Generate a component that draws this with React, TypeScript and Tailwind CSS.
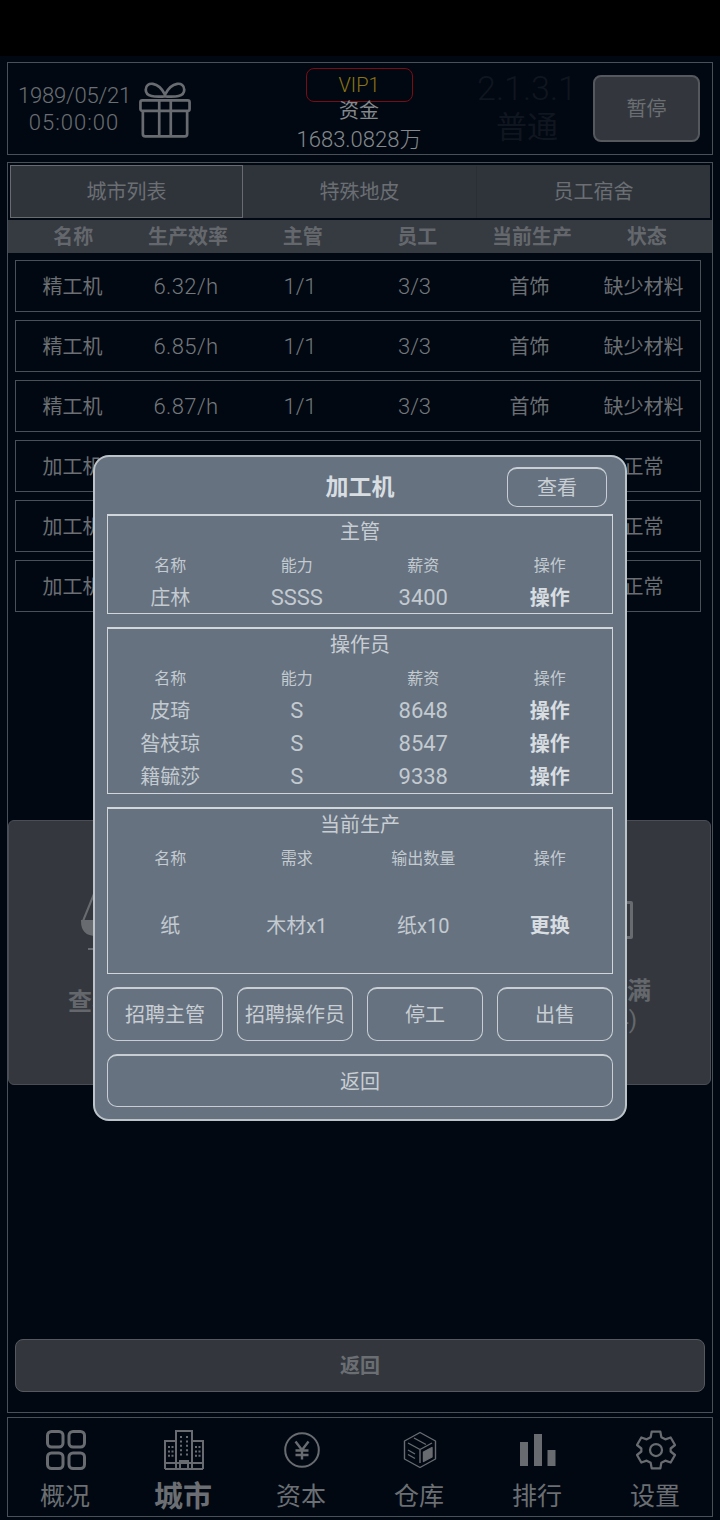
import { ReactNode } from 'react';

const FONT = "font-['Roboto','Noto_Sans_CJK_SC',sans-serif]";

const machines = [
  { name: '精工机', rate: '6.32/h', lead: '1/1', staff: '3/3', product: '首饰', status: '缺少材料' },
  { name: '精工机', rate: '6.85/h', lead: '1/1', staff: '3/3', product: '首饰', status: '缺少材料' },
  { name: '精工机', rate: '6.87/h', lead: '1/1', staff: '3/3', product: '首饰', status: '缺少材料' },
  { name: '加工机', rate: '6.40/h', lead: '1/1', staff: '3/3', product: '纸', status: '正常' },
  { name: '加工机', rate: '6.52/h', lead: '1/1', staff: '3/3', product: '纸', status: '正常' },
  { name: '加工机', rate: '6.61/h', lead: '1/1', staff: '3/3', product: '纸', status: '正常' },
];

const operators = [
  { name: '皮琦', skill: 'S', pay: '8648' },
  { name: '昝枝琼', skill: 'S', pay: '8547' },
  { name: '籍毓莎', skill: 'S', pay: '9338' },
];

function GiftIcon() {
  return (
    <svg width="52" height="60" viewBox="0 0 54 60" fill="none" stroke="#686c70" strokeWidth="2.8" strokeLinejoin="round">
      <path d="M27 17C21 17 7 19 7 10C7 1 20 1 27 15C34 1 47 1 47 10C47 19 33 17 27 17Z" />
      <rect x="1.5" y="21" width="51" height="11" rx="2" />
      <path d="M4 32V56C4 57.5 5 58.5 6.5 58.5H47.5C49 58.5 50 57.5 50 56V32" />
      <path d="M21 21V58M33 21V58" />
    </svg>
  );
}

function GridIcon() {
  return (
    <svg width="40" height="40" viewBox="0 0 40 40" fill="none" stroke="#686c70" strokeWidth="3">
      <rect x="1.5" y="1.5" width="15.5" height="15.5" rx="4" />
      <rect x="23" y="1.5" width="15.5" height="15.5" rx="4" />
      <rect x="1.5" y="23" width="15.5" height="15.5" rx="4" />
      <rect x="23" y="23" width="15.5" height="15.5" rx="4" />
    </svg>
  );
}

function CityIcon() {
  return (
    <svg width="40" height="40" viewBox="0 0 40 40" fill="none" stroke="#686c70" strokeWidth="2">
      <path d="M1 39V11H12M39 39V11H28M12 39V1H28V39" />
      <path d="M1 33H39M1 39H39" />
      <path d="M16 39V31H24V39" />
      <path d="M17 6V27M23 6V27M5 16V28M8.500 16V28M32 16V28M35.500 16V28" strokeDasharray="2 2.4" />
    </svg>
  );
}

function YenIcon() {
  return (
    <svg width="36" height="36" viewBox="0 0 36 36" fill="none" stroke="#686c70" strokeWidth="2">
      <circle cx="18" cy="18" r="16.8" />
      <path d="M11.5 9.5L18 18L24.5 9.5M18 18V27.5M11.5 18.5H24.5M11.5 23H24.5" strokeWidth="2.4" />
    </svg>
  );
}

function CubeIcon() {
  return (
    <svg width="34" height="38" viewBox="0 0 34 38" fill="none" stroke="#686c70" strokeWidth="1.4" strokeLinejoin="round">
      <path d="M17 1.500L32.500 10V28L17 36.500L1.500 28V10Z" />
      <path d="M5 12L17 18.500L29 12M17 18.500V32" />
      <path d="M11 7L23 13.500M5 19L12 23M5 23.500L12 27.500" />
      <path d="M20.500 21L29 16.500V26L20.500 30.500Z" fill="#686c70" />
    </svg>
  );
}

function BarsIcon() {
  return (
    <svg width="36" height="32" viewBox="0 0 36 32" fill="#686c70">
      <rect x="0" y="8" width="8" height="24" />
      <rect x="14" y="0" width="8" height="32" />
      <rect x="27.500" y="16" width="8" height="16" />
    </svg>
  );
}

function GearIcon() {
  return (
    <svg width="40" height="40" viewBox="0 0 24 24" fill="none" stroke="#686c70" strokeWidth="1.35" strokeLinejoin="round">
      <path d="M9.400 1H14.600L15.200 4.300L17.600 5.600L20.800 4.500L23.400 9L20.800 11.100V12.900L23.400 15L20.800 19.500L17.600 18.400L15.200 19.700L14.600 23H9.400L8.800 19.700L6.400 18.400L3.200 19.500L.6 15L3.200 12.900V11.100L.6 9L3.200 4.500L6.400 5.600L8.800 4.300Z" />
      <circle cx="12" cy="12" r="3.600" />
    </svg>
  );
}

function ScaleIcon() {
  return (
    <svg width="76" height="70" viewBox="0 0 76 70" fill="none" stroke="#686c70" strokeWidth="2">
      <path d="M16 6L3 38M16 6L30 38" />
      <path d="M2 38H30C30 48 24 52 16 52C8 52 2 48 2 38Z" fill="#686c70" />
      <path d="M40 66H8" />
    </svg>
  );
}

function NavItem({ icon, label, active }: { icon: ReactNode; label: string; active?: boolean }) {
  return (
    <div className="flex w-[118px] shrink-0 flex-col items-center">
      <div className="ml-[2px] flex h-[46px] items-center justify-center">{icon}</div>
      <span className={active ? 'mt-[4px] text-[29px] leading-[40px] font-bold' : 'mt-[4px] text-[25px] leading-[40px]'}>{label}</span>
    </div>
  );
}

function ModalBtn({ label, className }: { label: string; className?: string }) {
  return (
    <button className={`flex items-center justify-center whitespace-nowrap rounded-[10px] border border-t-2 border-[#c8ced4] pt-[1px] text-[20px] text-[#c8ced3] ${className ?? ''}`}>
      {label}
    </button>
  );
}

function ModalRow({ cells, action }: { cells: string[]; action: string }) {
  return (
    <div className="-mx-px grid h-[33px] grid-cols-4 items-center text-center text-[22px] leading-[26px] text-[#c3cad0]">
      <span className="text-[20px]">{cells[0]}</span>
      <span>{cells[1]}</span>
      <span>{cells[2]}</span>
      <span className="text-[20px] font-bold text-[#d8dde1]">{action}</span>
    </div>
  );
}

function ModalSection({ title, head, height, children }: { title: string; head: string[]; height: string; children: ReactNode }) {
  return (
    <div className={`border border-t-2 border-[#d0d6da] pt-[1px] ${height}`}>
      <div className="h-[31px] text-center text-[20px] leading-[30px] text-[#c8ced3]">{title}</div>
      <div className="-mx-px mt-[6px] mb-[3px] grid h-[24px] grid-cols-4 items-center text-center text-[16px] text-[#c3cad0]">
        {head.map(cell => (
          <span key={cell}>{cell}</span>
        ))}
      </div>
      {children}
    </div>
  );
}

export default function App() {
  return (
    <div className={`relative flex h-[1520px] w-[720px] flex-col overflow-hidden bg-[#010812] ${FONT} text-[#6b6f73]`}>
      <div className="h-[56px] shrink-0 bg-black" />

      {/* Status bar */}
      <div className="ml-[7px] mt-[6px] flex h-[93px] w-[706px] items-center border border-[#4a5058]">
        <div className="ml-[10px] w-[112px] text-center text-[22px] font-light leading-[27px] tracking-[-0.2px]">
          <div>1989/05/21</div>
          <div className="tracking-[1px]">05:00:00</div>
        </div>
        <div className="ml-[9px]">
          <GiftIcon />
        </div>
        <div className="ml-[103px] flex h-full w-[130px] flex-col items-center pt-[5px]">
          <div className="flex h-[34px] w-[107px] shrink-0 items-center justify-center rounded-[8px] border border-[#7a0c14] text-[20px] font-light text-[#8c7512]">
            VIP1
          </div>
          <div className="h-[18px] text-[20px] leading-[18px] text-[#85898c]">资金</div>
          <div className="mt-[5px] whitespace-nowrap text-[22px] font-light leading-[30px] text-[#85898c]">1683.0828万</div>
        </div>
        <div className="ml-[44px] flex w-[118px] flex-col items-center text-[#10161f]">
          <div className="text-[34px] font-light leading-[38px]">2.1.3.1</div>
          <div className="mt-[1px] text-[31px] leading-[40px]">普通</div>
        </div>
        <button className="ml-[7px] flex h-[67px] w-[107px] items-center justify-center rounded-[8px] border-2 border-[#55595e] bg-[#33373d] text-[20px]">
          暂停
        </button>
      </div>

      {/* Main section */}
      <div className="ml-[7px] mt-[7px] flex h-[1251px] w-[706px] flex-col border border-[#4a5058]">
        <div className="mx-[2px] mt-[2px] flex h-[53px] bg-[#2f343b] pt-[1px] text-[20px]">
          <div className="-mt-[1px] flex w-[233px] items-center justify-center border border-[#686c70] pt-[1px]">城市列表</div>
          <div className="flex w-[234px] items-center justify-center border-r border-[#2a2e35]">特殊地皮</div>
          <div className="flex flex-1 items-center justify-center">员工宿舍</div>
        </div>
        <div className="mt-[2px] grid h-[33px] grid-cols-6 items-center bg-[#363a41] px-[8px] text-center text-[20px] font-bold text-[#64686c]">
          {['名称', '生产效率', '主管', '员工', '当前生产', '状态'].map(h => (
            <span key={h} className="whitespace-nowrap">{h}</span>
          ))}
        </div>

        <div className="ml-[7px] mt-[7px] flex w-[686px] flex-col gap-[8px]">
          {machines.map((m, i) => (
            <div key={i} className="grid h-[52px] grid-cols-[113px_114px_114px_115px_115px_113px] items-center border border-[#4a5058] pt-[1px] text-center text-[20px]">
              <span>{m.name}</span>
              <span className="text-[22px] font-light tracking-[0.4px] text-[#74787c]">{m.rate}</span>
              <span className="text-[22px] font-light text-[#74787c]">{m.lead}</span>
              <span className="text-[22px] font-light text-[#74787c]">{m.staff}</span>
              <span>{m.product}</span>
              <span className="whitespace-nowrap">{m.status}</span>
            </div>
          ))}
        </div>

        {/* Cards behind the dialog */}
        <div className="mt-[208px] flex h-[265px] w-[703px] gap-[10px]">
          <div className="flex flex-1 flex-col items-start rounded-[6px] border border-[#4a4e54] bg-[#34383e] pl-[59px] pt-[62px]">
            <div className="ml-[12px]">
              <ScaleIcon />
            </div>
            <div className="mt-[31px] text-[24px] font-bold text-[#64686c]">查看市场</div>
          </div>
          <div className="flex flex-1 flex-col items-end rounded-[6px] border border-[#4a4e54] bg-[#34383e] pr-[59px] pt-[80px]">
            <div className="mb-[38px] mr-[18px] h-[38px] w-[28px] rounded-[2px] border-[3px] border-[#686c70]" />
            <div className="text-[24px] font-bold leading-[29px] text-[#64686c]">已满</div>
            <div className="mr-[14px] text-[24px] leading-[29px] text-[#64686c]">(4)</div>
          </div>
        </div>

        <div className="ml-[7px] mt-[254px] flex h-[53px] w-[690px] items-center justify-center rounded-[8px] border border-[#55595e] bg-[#33373d] text-[20px] font-bold text-[#6b6f73]">
          返回
        </div>
      </div>

      {/* Bottom navigation */}
      <div className="ml-[7px] mt-[4px] h-[100px] w-[706px] border border-[#4a5058] pt-[9px]">
        <div className="-ml-[2px] flex">
          <NavItem icon={<GridIcon />} label="概况" />
          <NavItem icon={<CityIcon />} label="城市" active />
          <NavItem icon={<YenIcon />} label="资本" />
          <NavItem icon={<CubeIcon />} label="仓库" />
          <NavItem icon={<BarsIcon />} label="排行" />
          <NavItem icon={<GearIcon />} label="设置" />
        </div>
      </div>

      {/* Machine dialog */}
      <div className="absolute left-[93px] top-[455px] h-[666px] w-[534px] rounded-[16px] border-2 border-[#bcc4ca] bg-[#667280] px-[12px]">
        <div className="relative flex h-[57px] items-center justify-center pt-[5px]">
          <span className="text-[23px] font-bold text-[#d8dde1]">加工机</span>
          <ModalBtn label="查看" className="absolute right-[6px] top-[10px] h-[40px] w-[100px]" />
        </div>

        <ModalSection title="主管" head={['名称', '能力', '薪资', '操作']} height="h-[100px]">
          <ModalRow cells={['庄林', 'SSSS', '3400']} action="操作" />
        </ModalSection>

        <div className="mt-[13px]">
          <ModalSection title="操作员" head={['名称', '能力', '薪资', '操作']} height="h-[167px]">
            {operators.map(op => (
              <ModalRow key={op.name} cells={[op.name, op.skill, op.pay]} action="操作" />
            ))}
          </ModalSection>
        </div>

        <div className="mt-[13px]">
          <ModalSection title="当前生产" head={['名称', '需求', '输出数量', '操作']} height="h-[167px]">
            <div className="-mx-px mt-[25px] grid h-[60px] grid-cols-4 items-center text-center text-[20px] text-[#c3cad0]">
              <span>纸</span>
              <span>木材x1</span>
              <span>纸x10</span>
              <span className="font-bold text-[#d8dde1]">更换</span>
            </div>
          </ModalSection>
        </div>

        <div className="mt-[13px] flex h-[54px] justify-between">
          <ModalBtn label="招聘主管" className="w-[116px]" />
          <ModalBtn label="招聘操作员" className="w-[116px]" />
          <ModalBtn label="停工" className="w-[116px]" />
          <ModalBtn label="出售" className="w-[116px]" />
        </div>
        <ModalBtn label="返回" className="mt-[13px] h-[53px] w-full" />
      </div>
    </div>
  );
}
